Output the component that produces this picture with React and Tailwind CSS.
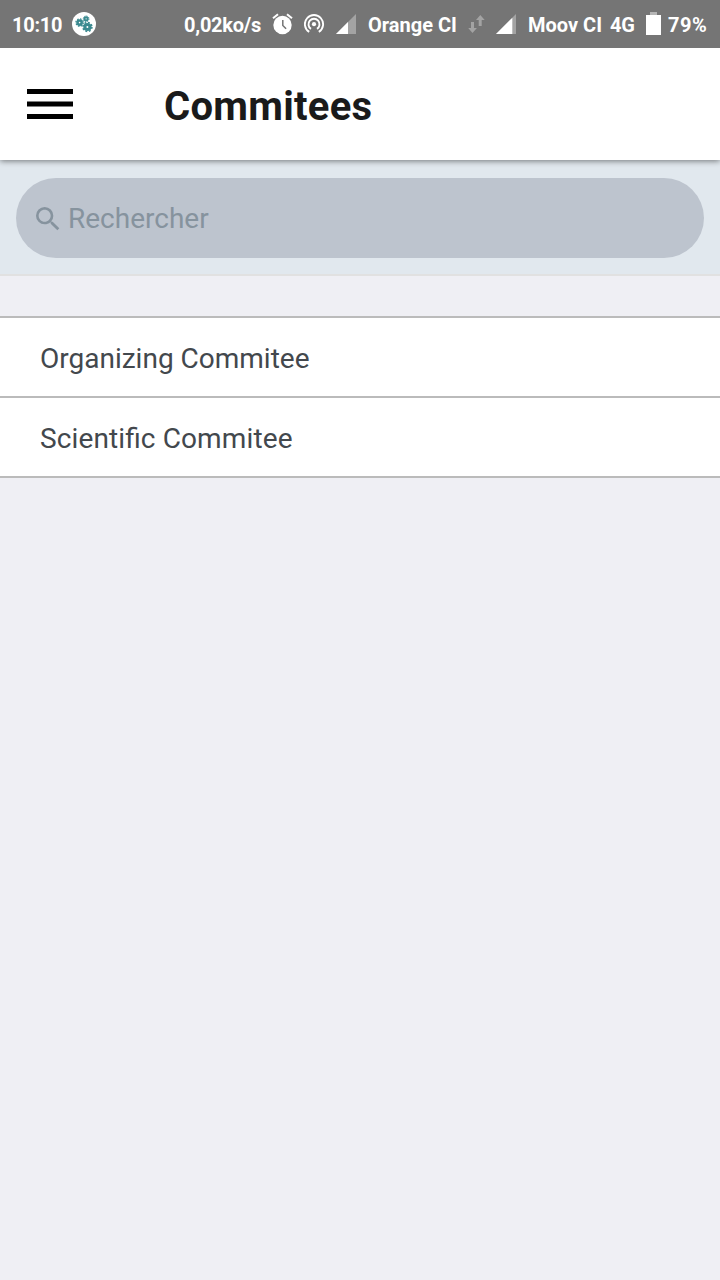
import { useState } from 'react'
import { MdSearch } from 'react-icons/md'

const committees = [
  { name: 'Organizing Commitee', tracking: '' },
  { name: 'Scientific Commitee', tracking: "tracking-[0.12px] [font-feature-settings:'liga']" },
]

const Gear = ({ x, y, size }) => (
  <g transform={`translate(${x} ${y}) scale(${size})`}>
    <circle r="2.6" fill="none" stroke="#3b8a90" strokeWidth="3.2" />
    <circle r="4.6" fill="none" stroke="#3b8a90" strokeWidth="1.6" strokeDasharray="1.9 1.71" />
  </g>
)

const AppBadge = () => (
  <svg className="ml-[9px] h-6 w-6 shrink-0" viewBox="0 0 24 24">
    <circle cx="12" cy="12" r="12" fill="#fff" />
    <Gear x={7.6} y={10.6} size={0.8} />
    <Gear x={14.1} y={6.8} size={0.62} />
    <Gear x={15.4} y={15} size={0.98} />
  </svg>
)

const AlarmIcon = () => (
  <svg className="mr-2.5 h-6 w-[22px] shrink-0" viewBox="0 0 22 24">
    <circle cx="10.5" cy="13" r="9.2" fill="#fff" />
    <path d="M1 6.3 6 2.2M20 6.3 15 2.2" stroke="#fff" strokeWidth="2" />
    <path d="M10.8 8v5.4l3.3 3.4" fill="none" stroke="#757575" strokeWidth="1.5" />
  </svg>
)

const HotspotIcon = () => (
  <svg className="mr-[11px] h-6 w-[21px] shrink-0" viewBox="0 0 21 24" fill="none" stroke="#fff" strokeWidth="1.9">
    <circle cx="10" cy="12.2" r="2.1" fill="#fff" stroke="none" />
    <path d="M7 16.9a5.5 5.5 0 1 1 6 0" />
    <path d="M5.2 19.9a9.1 9.1 0 1 1 9.6 0" />
  </svg>
)

const SignalIcon = ({ level }) => (
  <svg className="mr-3 h-5 w-5 shrink-0" viewBox="0 0 20 20">
    <path d="M20 0v20H0z" fill="#a3a3a3" />
    <path d={`M${level} ${20 - level}V20H0z`} fill="#fff" />
  </svg>
)

const DataIcon = () => (
  <svg className="mr-2.5 h-[18px] w-[18px] shrink-0" viewBox="0 0 18 18" fill="#a3a3a3">
    <path d="M3 7h3v6h2.9L4.5 18 .2 13H3z" />
    <path d="M12.3 0 16.7 5h-3v6h-3V5H8z" />
  </svg>
)

const BatteryIcon = () => (
  <svg className="mr-[7px] h-6 w-[15px] shrink-0" viewBox="0 0 15 24">
    <path d="M4 0h7v3h4v5H0V3h4z" fill="#b5b5b5" />
    <path d="M0 3h15v20H0z" fill="#fff" />
  </svg>
)

function StatusBar() {
  return (
    <div className="flex h-12 items-center whitespace-nowrap bg-[#757575] pl-3 text-[20px] leading-6 text-white [&>span]:pt-0.5">
      <span className="w-[51px] shrink-0 font-bold tracking-[-0.25px]">10:10</span>
      <AppBadge />
      <span className="ml-[88px] w-[88px] shrink-0 font-bold tracking-[-0.25px]">0,02ko/s</span>
      <AlarmIcon />
      <HotspotIcon />
      <SignalIcon level={12} />
      <span className="w-[100px] shrink-0 font-bold">Orange CI</span>
      <DataIcon />
      <SignalIcon level={16.3} />
      <span className="w-[82px] shrink-0 font-bold">Moov CI</span>
      <span className="w-9 shrink-0 font-bold tracking-[-0.3px]">4G</span>
      <BatteryIcon />
      <span className="font-bold tracking-[0.5px]">79%</span>
    </div>
  )
}

export default function App() {
  const [search, setSearch] = useState('')

  const filtered = committees.filter(c => c.name.toLowerCase().includes(search.toLowerCase()))

  return (
    <div className="min-h-screen bg-[#efeff4] font-['Roboto',sans-serif]">
      <StatusBar />

      {/* Header */}
      <header className="relative z-10 flex h-28 items-center bg-white pl-[27px] shadow-[0_1px_6px_rgba(0,0,0,0.5)] [clip-path:inset(0_0_-12px_0)]">
        <button className="h-[30px] w-[46px]" aria-label="Menu">
          <svg className="h-[30px] w-[46px]" viewBox="0 0 46 30">
            <path d="M0 0h46v5H0zM0 12.4h46v5.2H0zM0 25h46v5H0z" />
          </svg>
        </button>
        <h1 className="ml-[91px] mt-1.5 text-[40px] font-bold leading-[48px] tracking-[0.28px] text-[#1a1a1a]">Commitees</h1>
      </header>

      {/* Search */}
      <div className="h-[116px] border-b-2 border-[#e1e1e1] bg-[#e1e8ee] px-4 pt-[18px]">
        <label className="flex h-20 items-center rounded-full bg-[#bdc4ce] pl-4 pt-0.5 text-[#86939e]">
          <MdSearch className="h-8 w-8 shrink-0" />
          <input
            value={search}
            onChange={e => setSearch(e.target.value)}
            placeholder="Rechercher"
            className="ml-1 w-full bg-transparent text-[28px] leading-8 text-[#43484d] outline-none placeholder:text-[#86939e]"
          />
        </label>
      </div>

      {/* List */}
      <ul className="mt-10 border-t-2 border-[#bbbbbb]">
        {filtered.map(({ name, tracking }) => (
          <li key={name} className={`flex h-20 items-center border-b-2 border-[#bbbbbb] bg-white px-10 pt-1 text-[28px] text-[#43484d] ${tracking}`}>
            {name}
          </li>
        ))}
      </ul>
    </div>
  )
}
